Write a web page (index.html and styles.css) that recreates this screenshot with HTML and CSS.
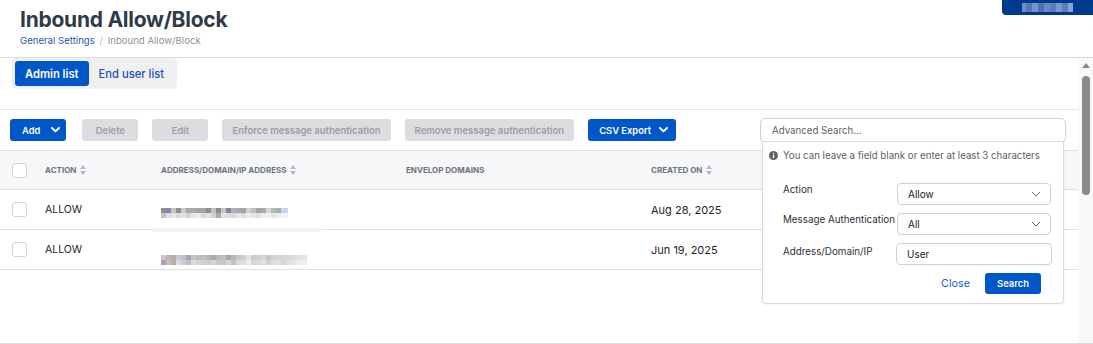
FILE: index.html
```html
<!DOCTYPE html>
<html lang="en">
<head>
  <meta charset="UTF-8">
  <title>Inbound Allow/Block</title>
  <meta name="viewport" content="width=device-width, initial-scale=1.0">
  <link rel="stylesheet" href="styles.css">
</head>
<body>
  <div class="header">
    <div class="header-title">
      <h1>Inbound Allow/Block</h1>
      <div class="breadcrumb">
        <a class="crumb-link">General Settings</a>
        <span class="crumb-sep">/</span>
        <span class="crumb-current">Inbound Allow/Block</span>
      </div>
    </div>
    <div class="account">
      <div class="account-name"></div>
    </div>
  </div>

  <div class="workspace">
    <div class="content">
      <div class="tabs-bar">
        <div class="tabs">
          <button class="tab active">Admin list</button>
          <button class="tab">End user list</button>
        </div>
      </div>

      <div class="toolbar">
        <button class="btn primary btn-add">
          Add
          <svg width="9" height="6" viewBox="0 0 9 6"><path d="M1 1l3.5 3.4L8 1" stroke="#fff" stroke-width="2" fill="none" stroke-linecap="round" stroke-linejoin="round"/></svg>
        </button>
        <button class="btn disabled">Delete</button>
        <button class="btn disabled">Edit</button>
        <button class="btn disabled btn-wide">Enforce message authentication</button>
        <button class="btn disabled btn-wide">Remove message authentication</button>
        <button class="btn primary btn-csv">
          CSV Export
          <svg width="9" height="6" viewBox="0 0 9 6"><path d="M1 1l3.5 3.4L8 1" stroke="#fff" stroke-width="2" fill="none" stroke-linecap="round" stroke-linejoin="round"/></svg>
        </button>

        <div class="search">
          <input class="search-input" type="text" placeholder="Advanced Search...">
          <div class="search-panel">
            <div class="search-hint">
              <svg width="9" height="9" viewBox="0 0 10 10"><circle cx="5" cy="5" r="5" fill="#5f6368"/><rect x="4.3" y="4.3" width="1.4" height="3.5" fill="#fff"/><circle cx="5" cy="2.7" r="0.85" fill="#fff"/></svg>
              You can leave a field blank or enter at least 3 characters
            </div>
            <div class="search-form">
              <label class="field-label">Action</label>
              <div class="select">
                <span>Allow</span>
                <svg width="10" height="6" viewBox="0 0 10 6"><path d="M1 1l4 4 4-4" stroke="#6b6e73" stroke-width="1" fill="none"/></svg>
              </div>
              <label class="field-label">Message Authentication</label>
              <div class="select">
                <span>All</span>
                <svg width="10" height="6" viewBox="0 0 10 6"><path d="M1 1l4 4 4-4" stroke="#6b6e73" stroke-width="1" fill="none"/></svg>
              </div>
              <label class="field-label label-address">Address/Domain/IP</label>
              <input class="text-field" type="text" value="User">
            </div>
            <div class="search-actions">
              <a class="link-close">Close</a>
              <button class="btn primary btn-search">Search</button>
            </div>
          </div>
        </div>
      </div>

      <div class="table">
        <div class="row head">
          <div class="cell check"><span class="checkbox"></span></div>
          <div class="cell">ACTION <svg class="sort" width="6" height="10" viewBox="0 0 6 10"><path d="M3 0L6 4H0Z M3 10L0 6H6Z" fill="#b7bbc2"/></svg></div>
          <div class="cell">ADDRESS/DOMAIN/IP ADDRESS <svg class="sort" width="6" height="10" viewBox="0 0 6 10"><path d="M3 0L6 4H0Z M3 10L0 6H6Z" fill="#b7bbc2"/></svg></div>
          <div class="cell">ENVELOP DOMAINS</div>
          <div class="cell">CREATED ON <svg class="sort" width="6" height="10" viewBox="0 0 6 10"><path d="M3 0L6 4H0Z M3 10L0 6H6Z" fill="#b7bbc2"/></svg></div>
        </div>
        <div class="row first">
          <div class="cell check"><span class="checkbox"></span></div>
          <div class="cell">ALLOW</div>
          <div class="cell addr"><div class="blur blur-a"><i></i><i></i></div></div>
          <div class="cell"></div>
          <div class="cell date">Aug 28, 2025</div>
        </div>
        <div class="row second">
          <div class="cell check"><span class="checkbox"></span></div>
          <div class="cell">ALLOW</div>
          <div class="cell addr"><div class="blur blur-b"><i></i><i></i></div></div>
          <div class="cell"></div>
          <div class="cell date">Jun 19, 2025</div>
        </div>
      </div>
    </div>

    <div class="scrollbar">
      <div class="scroll-up"></div>
      <div class="scroll-thumb"></div>
    </div>
  </div>
</body>
</html>
```

FILE: styles.css
```css
:root {
  --blue: #0057c9;
  --line: #dedfe2;
  --text: #1f2328;
}

* {
  box-sizing: border-box;
}

body {
  margin: 0;
  height: 344px;
  overflow: hidden;
  background: #fff;
  font-family: Inter, "Noto Sans", sans-serif;
  color: var(--text);
}

/* header */
.header {
  display: flex;
  justify-content: space-between;
  align-items: flex-start;
  height: 58px;
  border-bottom: 1px solid #dcdcdc;
}

.header h1 {
  margin: 0;
  padding: 7px 0 0 20px;
  font-size: 21px;
  line-height: 26px;
  font-weight: 700;
  color: #2f3b48;
  letter-spacing: -0.25px;
}

.breadcrumb {
  padding-left: 20px;
  margin-top: 1px;
  font-size: 9.6px;
  line-height: 14px;
}

.crumb-link {
  color: #2b55a8;
}

.crumb-sep {
  color: #b3b7bd;
  margin: 0 2px;
}

.crumb-current {
  color: #8c93a0;
}

.account {
  width: 91px;
  height: 15px;
  background: #003a8c;
  border-bottom-left-radius: 4px;
  display: flex;
  justify-content: center;
  align-items: center;
}

.account-name {
  width: 51px;
  height: 9px;
  background: linear-gradient(90deg, #6d8dc8 0 4px, #5478b8 4px 10px, #7592cb 10px 16px, #4e72b3 16px 22px, #6a8ac5 22px 28px, #587bbb 28px 34px, #7a97ce 34px 40px, #5a7dbc 40px 46px, #8aa3d4 46px 51px);
}

/* main area */
.workspace {
  display: flex;
  height: 286px;
  border-bottom: 1px solid #dcdcdc;
}

.content {
  flex: 1;
  min-width: 0;
}

.scrollbar {
  width: 15px;
  background: #f8f8f8;
  display: flex;
  flex-direction: column;
  align-items: center;
  padding-top: 5px;
}

.scroll-up {
  width: 0;
  height: 0;
  border-left: 4px solid transparent;
  border-right: 4px solid transparent;
  border-bottom: 5px solid #8a8a8a;
}

.scroll-thumb {
  margin-top: 8px;
  width: 8px;
  height: 119px;
  border-radius: 4px;
  background: #8a8a8a;
}

/* tabs */
.tabs-bar {
  height: 52px;
  padding-left: 12px;
  border-bottom: 1px solid #e3e4e6;
}

.tabs {
  display: inline-flex;
  padding: 3px;
  background: #eff0f2;
  border-radius: 4px;
}

.tab {
  height: 25px;
  padding: 0 10px;
  border: none;
  border-radius: 3px;
  background: transparent;
  font-family: inherit;
  font-size: 11.2px;
  font-weight: 500;
  color: #1d4fb3;
}

.tab.active {
  background: var(--blue);
  color: #fff;
  font-weight: 600;
}

/* toolbar */
.toolbar {
  display: flex;
  align-items: center;
  gap: 14px;
  height: 40px;
  padding: 0 12px 0 10px;
}

.btn {
  display: flex;
  align-items: center;
  justify-content: center;
  height: 22px;
  min-width: 56px;
  padding: 0 10px;
  border: none;
  border-radius: 3px;
  font-family: inherit;
  font-size: 9.4px;
  font-weight: 600;
}

.btn.primary {
  background: var(--blue);
  color: #fff;
}

.btn.disabled {
  background: #dcdde0;
  color: #9c9ea4;
}

.btn-wide {
  font-size: 9.5px;
}

.btn-add {
  justify-content: flex-start;
  gap: 11px;
  padding: 0 6px 0 12px;
  margin-right: 2px;
}

.btn-csv {
  gap: 8px;
  padding: 0 8px 0 11px;
}

/* advanced search */
.search {
  position: relative;
  margin-left: auto;
  width: 306px;
}

.search-input {
  display: block;
  width: 100%;
  height: 25px;
  padding: 0 11px;
  border: 1px solid #cfd1d4;
  border-radius: 5px;
  font-family: inherit;
  font-size: 9.7px;
  color: #333;
}

.search-input::placeholder {
  color: #5d6066;
}

.search-panel {
  position: absolute;
  top: 23px;
  left: 2px;
  right: 2px;
  height: 163px;
  background: #fff;
  border: 1px solid #d9dadd;
  border-radius: 0 0 4px 4px;
  box-shadow: 0 1px 3px rgba(0, 0, 0, 0.06);
  z-index: 2;
}

.search-hint {
  display: flex;
  align-items: center;
  gap: 5px;
  padding: 7px 0 0 6px;
  font-size: 9.7px;
  line-height: 14px;
  color: #5b5f66;
}

.search-form {
  display: grid;
  grid-template-columns: 114px 154px;
  row-gap: 8px;
  margin: 20px 0 0 20px;
}

.field-label {
  font-size: 9.8px;
  line-height: 14px;
  color: #2d3035;
  white-space: nowrap;
}

.label-address {
  padding-top: 2px;
}

.select {
  display: flex;
  align-items: center;
  justify-content: space-between;
  height: 22px;
  padding: 0 9px 0 10px;
  border: 1px solid #cfd1d4;
  border-radius: 4px;
  font-size: 10px;
  color: #222;
}

.text-field {
  width: 156px;
  height: 22px;
  margin-left: -1px;
  padding: 0 10px;
  border: 1px solid #cfd1d4;
  border-radius: 4px;
  font-family: inherit;
  font-size: 10px;
  color: #222;
}

.search-actions {
  display: flex;
  justify-content: flex-end;
  align-items: center;
  gap: 15px;
  margin-top: 8px;
  padding-right: 22px;
}

.link-close {
  font-size: 10.8px;
  color: #1a5fd0;
}

.btn-search {
  height: 21px;
  min-width: 56px;
}

/* table */
.table {
  border-top: 1px solid #e1e2e5;
}

.row {
  display: grid;
  grid-template-columns: 45px 116px 245px 245px 1fr;
  align-items: center;
  height: 40px;
  border-bottom: 1px solid var(--line);
  font-size: 10.5px;
}

.row.head {
  height: 39px;
  background: #f6f7f9;
  font-size: 8px;
  font-weight: 700;
  color: #6d737d;
}

.cell {
  display: flex;
  align-items: center;
  gap: 4px;
}

.cell.check {
  padding-left: 12px;
}

.checkbox {
  display: block;
  width: 15px;
  height: 15px;
  border: 1px solid #d3d5d9;
  border-radius: 3px;
  background: #fff;
}

.date {
  font-size: 11px;
}

.cell.addr {
  position: relative;
  align-self: stretch;
  align-items: flex-start;
}

.row.first .addr::after {
  content: "";
  position: absolute;
  left: -8px;
  bottom: -3px;
  width: 169px;
  height: 4px;
  background: #f3f4f6;
}

.blur {
  display: flex;
  flex-direction: column;
}

.row.first .blur {
  margin-top: 18px;
}

.row.second .blur {
  margin-top: 25px;
}

.blur i {
  display: block;
  height: 5px;
}

.blur-a i {
  width: 127px;
}

.blur-a i:first-child {
  background: linear-gradient(90deg, #8e8d95 0 5px, #7e8ba8 5px 10px, #c2c6c7 10px 15px, #918f93 15px 20px, #c9cac9 20px 25px, #a6a8aa 25px 30px, #aaaaa9 30px 35px, #b39f90 35px 40px, #a2a6a9 40px 45px, #8c8f97 45px 50px, #bfc2c3 50px 55px, #8b8d95 55px 60px, #c7c6c0 60px 65px, #7e85a2 65px 70px, #b7b1a9 70px 75px, #a6acb2 75px 80px, #9fa5ac 80px 85px, #cfd0d0 85px 90px, #bebebc 90px 95px, #a4a4a6 95px 100px, #aaaba7 100px 105px, #d3d5d6 105px 110px, #b9bab6 110px 115px, #aeb0ac 115px 120px, #c9d7ee 120px 127px);
}

.blur-a i:last-child {
  background: linear-gradient(90deg, #c4c4c8 0 5px, #dcdde2 5px 10px, #e5e5e7 10px 15px, #d8d9dc 15px 20px, #e0e2e3 20px 25px, #d3d5d9 25px 30px, #e6e6e6 30px 35px, #ececea 35px 40px, #d9dbdf 40px 45px, #e2e3e6 45px 50px, #cfd0d4 50px 55px, #a9aaae 55px 60px, #e3e3e1 60px 65px, #dcdde2 65px 70px, #d8d9dd 70px 75px, #e7e7e7 75px 80px, #e0e0e2 80px 85px, #ececec 85px 90px, #e5e5e5 90px 95px, #dfe0e2 95px 100px, #ebebeb 100px 105px, #f0f0f0 105px 110px, #e6e6e6 110px 115px, #eeeeee 115px 120px, #f3f3f3 120px 127px);
}

.blur-b i {
  width: 146px;
}

.blur-b i:first-child {
  background: linear-gradient(90deg, #c8c6c8 0 5px, #b9b6b8 5px 10px, #b9aaa4 10px 15px, #c9c9cc 15px 20px, #bec2c6 20px 25px, #a4a8bd 25px 30px, #c6c2bf 30px 35px, #bdbab8 35px 40px, #c5bfbf 40px 45px, #b9b5b3 45px 50px, #a7a9b3 50px 55px, #b8b8bf 55px 60px, #c3bfbd 60px 65px, #a9a6a5 65px 70px, #bab8b6 70px 75px, #c8cac9 75px 80px, #d0d0cb 80px 85px, #e3e3df 85px 90px, #cbcbc7 90px 95px, #cfcfcd 95px 100px, #d5d5d3 100px 105px, #c8c7c4 105px 110px, #d2d2d0 110px 115px, #d6d6d6 115px 120px, #d5d5d3 120px 125px, #d8d8d8 125px 130px, #dddddd 130px 135px, #e0e0e0 135px 140px, #e6e6e6 140px 146px);
}

.blur-b i:last-child {
  background: linear-gradient(90deg, #a6a3aa 0 5px, #c5c1c2 5px 10px, #b7ada9 10px 15px, #dcdcde 15px 20px, #c9cbd0 20px 25px, #bfbfc8 25px 30px, #dedbd8 30px 35px, #d6d4d2 35px 40px, #d2ced1 40px 45px, #cfcbcd 45px 50px, #d4d5d8 50px 55px, #c8c8cd 55px 60px, #c9c6c4 60px 65px, #d8d6d5 65px 70px, #c4c2c1 70px 75px, #dcdddd 75px 80px, #e1e1de 80px 85px, #ececea 85px 90px, #d6d6d3 90px 95px, #dbdbd9 95px 100px, #e1e1df 100px 105px, #d2d1ce 105px 110px, #dddddb 110px 115px, #e0e0e0 115px 120px, #d8d8d6 120px 125px, #e2e2e2 125px 130px, #e6e6e6 130px 135px, #ebebeb 135px 140px, #eeeeee 140px 146px);
}
```
